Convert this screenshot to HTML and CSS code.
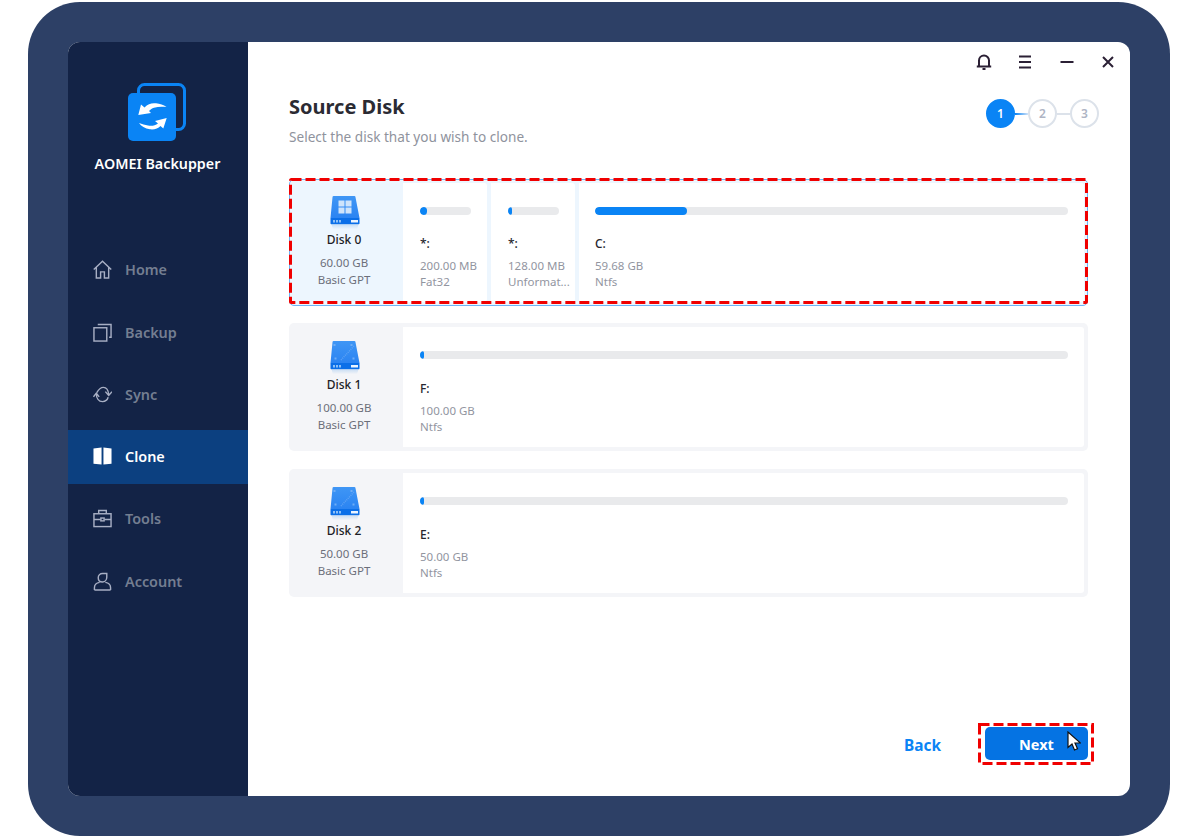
FILE: index.html
```html
<!DOCTYPE html>
<html lang="en">
<head>
<meta charset="utf-8">
<title>AOMEI Backupper</title>
<link rel="stylesheet" href="styles.css">
</head>
<body>
<svg class="defs" width="0" height="0" aria-hidden="true">
  <defs>
    <linearGradient id="diskTop" x1="0" y1="0" x2="0" y2="1"><stop offset="0" stop-color="#3f96f5"/><stop offset="1" stop-color="#2b84f2"/></linearGradient>
    <linearGradient id="diskShade" x1="0" y1="0" x2="0" y2="1"><stop offset="0" stop-color="#9cc4ee" stop-opacity=".5"/><stop offset="1" stop-color="#9cc4ee" stop-opacity="0"/></linearGradient>
    <symbol id="disk" viewBox="0 0 32 34">
      <path d="M3.500 1.200A1.200 1.200 0 0 1 4.700 0h20.600a1.200 1.200 0 0 1 1.200 1.200L30.500 22h-29z" fill="url(#diskTop)"/>
      <path d="M1.500 22h29v5.400a.8.8 0 0 1-.8.8H2.300a.8.8 0 0 1-.8-.8z" fill="#0b6fe8"/>
      <path d="M2.500 28.200h27l-1.500 5h-24z" fill="url(#diskShade)"/>
      <rect x="4" y="24" width="2" height="2.500" fill="#8cc0f8"/>
      <rect x="7" y="24" width="2" height="2.500" fill="#8cc0f8"/>
      <rect x="10" y="24" width="2" height="2.500" fill="#8cc0f8"/>
      <rect x="22" y="24" width="7" height="2.500" fill="#eaf4ff"/>
    </symbol>
  </defs>
</svg>
<div class="frame">
  <div class="window">
    <aside class="sidebar">
      <div class="brand">
        <svg class="logo" viewBox="0 0 60 60" width="60" height="60" aria-hidden="true">
          <rect x="11.500" y="3.500" width="46" height="45" rx="6" fill="none" stroke="#0a84f5" stroke-width="3"/>
          <rect x="1" y="12" width="48" height="48" rx="5" fill="#0a84f5"/>
          <path d="M11.300 34 14 23.500l3.500 3C21 22.500 25 21.800 29 22.300c4 .5 7.500 1.700 10.500 3.700-4.500-.5-8.500-.5-12.500.8-2 .7-3.500 1.700-5 3.200l2 2z" fill="#fff"/>
          <path d="M39.700 37 28 40l3 2.500c-3 2.500-7 2.500-10 2-3-.5-6-1.500-9-2.500 2 3 6 5.500 11 6.300 4.500.5 8-.8 10.500-3.300l2.800 2.500z" fill="#fff"/>
        </svg>
        <div class="brand-name">AOMEI Backupper</div>
      </div>
      <nav class="nav">
        <a class="nav-item">
          <svg class="nav-icon" viewBox="0 0 20 20" aria-hidden="true"><path d="M.8 10 10 1.200 19.200 10M3.500 8v11h4.500v-6.500h4V19h4.500V8"/></svg>
          <span>Home</span>
        </a>
        <a class="nav-item">
          <svg class="nav-icon" viewBox="0 0 20 20" aria-hidden="true"><rect x="1" y="5" width="13.500" height="14"/><path d="M5 1.500h14V15h-2"/></svg>
          <span>Backup</span>
        </a>
        <a class="nav-item">
          <svg class="nav-icon" viewBox="0 0 20 20" aria-hidden="true"><path d="M4 8c2-3.700 4.800-5.500 7-5.500 3 0 5 2.500 5.500 7.500M13 7l3.500 4L20 7"/><path d="M3.500 9c0 5 2.500 8.500 6.500 8.500 2.500 0 5-1.500 6-4.500M.5 12.500l3-4 3 4"/></svg>
          <span>Sync</span>
        </a>
        <a class="nav-item active">
          <svg class="nav-icon solid" viewBox="0 0 20 20" aria-hidden="true"><path d="M.5 1.500 9 .5v18l-8.500-.8zM11 .5l8.500 1v16.200l-8.500.8z"/></svg>
          <span>Clone</span>
        </a>
        <a class="nav-item">
          <svg class="nav-icon" viewBox="0 0 20 20" aria-hidden="true"><rect x="1" y="5" width="18" height="13.500"/><path d="M6 5V1.500h8V5M1 11h7M12 11h7"/><rect x="8.300" y="9.500" width="3.400" height="3"/></svg>
          <span>Tools</span>
        </a>
        <a class="nav-item">
          <svg class="nav-icon" viewBox="0 0 20 20" aria-hidden="true"><path d="M14.500 5.500c0 2.800-2 5-4.500 5s-4.500-1.800-4.500-4.500c0-2.500 2-4.500 4.500-4.500h4.500z"/><path d="M1.500 19v-2.500c0-3 2.500-5.200 5.500-5.600M18.500 19v-2.500c0-3-2.500-5.200-5.500-5.600M1.500 19h17"/></svg>
          <span>Account</span>
        </a>
      </nav>
    </aside>
    <main class="main">
      <div class="topbar">
        <svg class="tool" viewBox="0 0 16 16" aria-hidden="true"><path d="M.8 12.500h14.400M3 12.500V6.500a5 5 0 0 1 10 0v6M6.500 15h3"/></svg>
        <svg class="tool" viewBox="0 0 16 16" aria-hidden="true"><path d="M2 2.500h12M2 8h12M2 13.500h12"/></svg>
        <svg class="tool" viewBox="0 0 16 16" aria-hidden="true"><path d="M1.500 8h13"/></svg>
        <svg class="tool" viewBox="0 0 16 16" aria-hidden="true"><path d="M3 3l10 10M13 3 3 13"/></svg>
      </div>
      <div class="head">
        <div>
          <h1 class="title">Source Disk</h1>
          <p class="subtitle">Select the disk that you wish to clone.</p>
        </div>
        <ol class="steps">
          <li class="step current">1</li>
          <li class="link first"></li>
          <li class="step">2</li>
          <li class="link"></li>
          <li class="step">3</li>
        </ol>
      </div>

      <div class="disks">
        <section class="disk selected">
          <div class="disk-info">
            <div class="disk-icon">
              <svg viewBox="0 0 32 34" width="32" height="34" aria-hidden="true"><use href="#disk"/><path class="win" d="M9.500 4.500h6v6h-6zM16.500 4.500h6v6h-6zM9.500 11.500h6v6h-6zM16.500 11.500h6v6h-6z"/></svg>
            </div>
            <div class="disk-name">Disk 0</div>
            <div class="disk-meta">60.00 GB<br>Basic GPT</div>
          </div>
          <div class="parts">
            <div class="part small">
              <div class="bar"><div class="fill" style="width:7px"></div></div>
              <div class="part-name">*:</div>
              <div class="part-meta">200.00 MB<br>Fat32</div>
            </div>
            <div class="part small">
              <div class="bar"><div class="fill" style="width:4px"></div></div>
              <div class="part-name">*:</div>
              <div class="part-meta">128.00 MB<br>Unformat...</div>
            </div>
            <div class="part wide">
              <div class="bar"><div class="fill" style="width:92px"></div></div>
              <div class="part-name">C:</div>
              <div class="part-meta">59.68 GB<br>Ntfs</div>
            </div>
          </div>
          <svg class="dash dash-disk" viewBox="0 0 799 126" aria-hidden="true"><rect x="1.500" y="1.500" width="796" height="123" rx="1"/></svg>
        </section>

        <section class="disk">
          <div class="disk-info">
            <div class="disk-icon">
              <svg viewBox="0 0 32 34" width="32" height="34" aria-hidden="true"><use href="#disk"/><path class="screws" d="M4.500 3h2v2h-2zM21.500 3h2v2h-2zM5.500 16.500h2v2h-2zM23.500 16.500h2v2h-2z"/><path class="texture" d="M12 19 25 5"/></svg>
            </div>
            <div class="disk-name">Disk 1</div>
            <div class="disk-meta">100.00 GB<br>Basic GPT</div>
          </div>
          <div class="parts">
            <div class="part wide">
              <div class="bar"><div class="fill" style="width:4px"></div></div>
              <div class="part-name">F:</div>
              <div class="part-meta">100.00 GB<br>Ntfs</div>
            </div>
          </div>
        </section>

        <section class="disk">
          <div class="disk-info">
            <div class="disk-icon">
              <svg viewBox="0 0 32 34" width="32" height="34" aria-hidden="true"><use href="#disk"/><path class="screws" d="M4.500 3h2v2h-2zM21.500 3h2v2h-2zM5.500 16.500h2v2h-2zM23.500 16.500h2v2h-2z"/><path class="texture" d="M12 19 25 5"/></svg>
            </div>
            <div class="disk-name">Disk 2</div>
            <div class="disk-meta">50.00 GB<br>Basic GPT</div>
          </div>
          <div class="parts">
            <div class="part wide">
              <div class="bar"><div class="fill" style="width:4px"></div></div>
              <div class="part-name">E:</div>
              <div class="part-meta">50.00 GB<br>Ntfs</div>
            </div>
          </div>
        </section>
      </div>

      <div class="footer">
        <a class="back">Back</a>
        <div class="next-wrap">
          <button class="next">Next</button>
          <svg class="dash dash-next" viewBox="0 0 116 42" aria-hidden="true"><rect x="1.500" y="1.500" width="113" height="39"/></svg>
          <svg class="cursor" viewBox="0 0 14 21" width="14" height="21" aria-hidden="true"><path d="M1 1v15.500l4-3.500 2.500 6 3-1.300-2.500-5.700h5.500z"/></svg>
        </div>
      </div>
    </main>
  </div>
</div>
</body>
</html>
```
FILE: styles.css
```css
* { box-sizing: border-box; }
html, body { margin: 0; padding: 0; background: #fff; }
body { width: 1200px; height: 840px; overflow: hidden; font-family: "Noto Sans", "Open Sans", sans-serif; }
.defs { position: absolute; }

.frame { width: 1142px; height: 834px; margin: 2px 0 0 28px; padding: 40px; border-radius: 52px; background: #2d4066; }
.window { display: flex; width: 1062px; height: 754px; border-radius: 12px; overflow: hidden; background: #fff; }

.sidebar { flex: 0 0 180px; background: #132346; }
.brand { display: flex; flex-direction: column; align-items: center; padding-top: 39px; height: 200.850px; }
.logo { display: block; margin-left: -2px; }
.brand-name { margin-top: 13px; margin-left: -1px; font-size: 14.300px; line-height: 20px; font-weight: 600; color: #fff; }

.nav { display: flex; flex-direction: column; gap: 8.250px; }
.nav-item { display: flex; align-items: center; height: 54px; padding-left: 25px; gap: 13px; font-size: 14.400px; font-weight: 600; color: #747e91; }
.nav-item.active { background: #0c4080; color: #fff; }
.nav-icon { width: 19px; height: 19px; fill: none; stroke: #a8afc4; stroke-width: 1.500; }
.nav-icon.solid { fill: #fff; stroke: none; }

.main { flex: 1; display: flex; flex-direction: column; min-width: 0; padding: 0 42px 0 41px; }
.topbar { display: flex; justify-content: flex-end; gap: 25.300px; margin-right: -28px; padding-top: 12px; height: 44px; }
.tool { width: 16px; height: 16px; fill: none; stroke: #2b2035; stroke-width: 2; }

.head { display: flex; justify-content: space-between; align-items: flex-start; height: 92px; }
.title { margin: 7px 0 0; font-size: 20px; line-height: 28px; font-weight: 700; color: #2b2b33; }
.subtitle { margin: 6px 0 0; font-size: 13.600px; line-height: 20px; color: #8f939d; }
.steps { display: flex; align-items: center; list-style: none; margin: 13px -11px 0 0; padding: 0; }
.step { display: flex; align-items: center; justify-content: center; width: 29px; height: 29px; border-radius: 50%; border: 2px solid #dce2ea; font-size: 12px; font-weight: 600; color: #aeb4c4; }
.step.current { background: #0a84f5; border-color: #0a84f5; color: #fff; }
.link { width: 13px; height: 2px; background: #dce2ea; }
.link.first { background: linear-gradient(90deg, #0a84f5, #cfe2f8); }

.disks { display: flex; flex-direction: column; gap: 17px; margin-top: 1px; }
.disk { position: relative; display: flex; height: 128px; padding: 4px 4px 4px 0; border-radius: 5px; background: #f4f5f8; }
.disk + .disk + .disk { margin-top: 1px; }
.disk.selected { height: 127px; background: #edf6fe; border: 1px solid #6db5f7; padding: 3px; padding-left: 0; }

.disk-info { flex: 0 0 114px; display: flex; flex-direction: column; align-items: center; padding: 14px 4px 0 0; }
.selected .disk-info { flex-basis: 113px; padding: 13px 5px 0 0; }
.disk-icon { height: 34px; margin-left: 2px; }
.disk-icon svg { display: block; }
.win { fill: #cfe4fb; }
.screws { fill: #6fadf5; }
.texture { fill: none; stroke: #6fadf5; stroke-width: 1.500; stroke-dasharray: 1 1; opacity: .7; }
.disk-name { margin-top: 1px; font-size: 12px; line-height: 18px; font-weight: 500; color: #1d1d26; }
.disk-meta { margin-top: 6px; font-size: 11.500px; line-height: 16.500px; color: #6c6f7a; text-align: center; }

.parts { flex: 1; display: flex; gap: 4px; min-width: 0; }
.part { background: #fff; padding: 24px 16px 0 17px; min-width: 0; border-radius: 0 3px 3px 0; }
.part.small { flex: 0 0 84px; }
.part.wide { flex: 1; }
.small + .small + .wide { padding-left: 16px; }
.bar { height: 8px; border-radius: 4px; background: #e9eaec; overflow: hidden; }
.fill { height: 100%; border-radius: 4px; background: #0a84f5; }
.part-name { margin-top: 21px; font-size: 12px; line-height: 18px; font-weight: 500; color: #26262e; }
.selected .part-name { margin-top: 20px; }
.part-meta { margin-top: 5px; font-size: 11.500px; line-height: 16px; color: #92959f; white-space: nowrap; }

.dash { position: absolute; fill: none; stroke: #f00000; stroke-width: 3; stroke-dasharray: 10 4; }
.dash-disk { left: -1px; top: -2px; width: 799px; height: 126px; }
.dash-next { left: 0; top: 0; width: 116px; height: 42px; }

.footer { display: flex; justify-content: flex-end; align-items: center; gap: 37px; margin-top: auto; margin-right: -6px; margin-bottom: 31px; }
.back { padding-top: 2px; font-size: 15.400px; font-weight: 700; color: #0a84f5; }
.next-wrap { position: relative; width: 116px; height: 42px; padding: 4px 6px 4px 7px; }
.next { display: block; width: 103px; height: 33px; border: 0; border-radius: 5px; background: #0573e3; color: #fff; font: 700 14.500px "Noto Sans", sans-serif; }
.cursor { position: absolute; left: 89px; top: 8px; fill: #fff; stroke: #111; stroke-width: 1.200; }
```
